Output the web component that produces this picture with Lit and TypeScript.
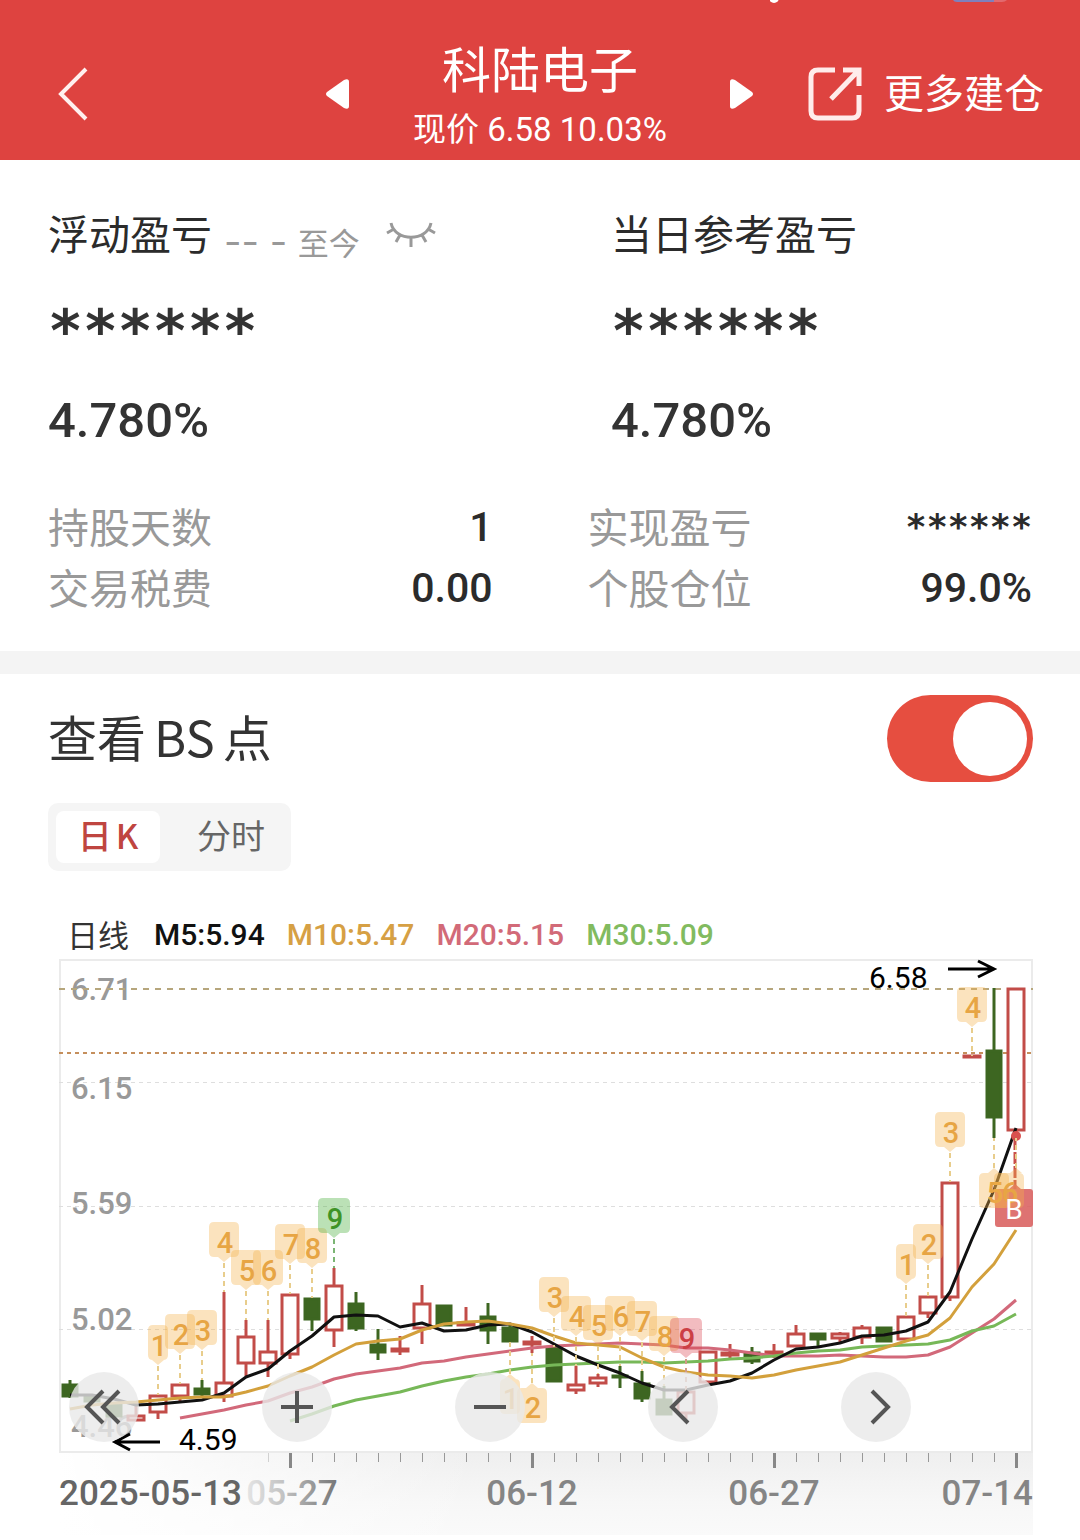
import { LitElement, html, svg, css } from "lit";
import { customElement, property, state } from "lit/decorators.js";

type Candle = [kind: "up" | "down", top: number, bottom: number, high: number, low: number];
type Tone = "amber" | "green" | "red";
interface Tag {
  at: number;
  text: string;
  y: number;
  end: number;
  below?: boolean;
  tone?: Tone;
  shift?: number;
}

const STEP = 22;
const xAt = (i: number) => 11 + STEP * i;

/* Body top, body bottom, high and low of each trading day, in chart units. */
const CANDLES: Candle[] = [
  ["down", 426, 439, 422, 440],
  ["down", 437, 444, 437, 444],
  ["down", 445, 459, 445, 459],
  ["up", 457, 463, 445, 463],
  ["up", 437, 455, 437, 461],
  ["up", 426, 439, 426, 444],
  ["down", 430, 437, 422, 440],
  ["up", 424, 439, 334, 444],
  ["up", 378, 406, 362, 418],
  ["up", 393, 406, 362, 419],
  ["up", 336, 397, 336, 401],
  ["down", 340, 362, 340, 373],
  ["up", 327, 373, 310, 389],
  ["down", 345, 371, 334, 373],
  ["down", 386, 395, 371, 402],
  ["up", 391, 393, 378, 397],
  ["up", 345, 371, 327, 386],
  ["down", 347, 368, 347, 368],
  ["up", 365, 367, 349, 368],
  ["down", 358, 373, 345, 386],
  ["down", 369, 384, 365, 384],
  ["up", 384, 386, 378, 395],
  ["down", 389, 424, 389, 424],
  ["up", 426, 433, 408, 436],
  ["up", 419, 426, 416, 429],
  ["down", 418, 418, 408, 430],
  ["down", 425, 441, 413, 444],
  ["down", 441, 457, 428, 457],
  ["up", 433, 456, 433, 461],
  ["up", 393, 425, 393, 425],
  ["up", 395, 397, 386, 400],
  ["down", 394, 404, 389, 406],
  ["up", 394, 396, 386, 400],
  ["up", 375, 389, 367, 389],
  ["down", 375, 382, 375, 390],
  ["up", 375, 381, 374, 384],
  ["up", 369, 380, 367, 386],
  ["down", 369, 384, 369, 384],
  ["up", 358, 382, 358, 382],
  ["up", 338, 356, 338, 360],
  ["up", 224, 340, 224, 343],
  ["up", 98, 99, 98, 99],
  ["down", 92, 160, 30, 180],
  ["up", 30, 173, 30, 176],
];

const AVERAGES = [
  {
    cls: "ma20",
    from: 5,
    ys: [460, 456, 452, 447, 443, 435, 429, 421, 416, 413, 410, 405, 403, 399, 396, 393, 390, 388, 387, 386, 385, 386, 387, 390, 390, 392, 395, 398, 398, 398, 397, 398, 399, 399, 397, 389, 375, 361, 342],
  },
  {
    cls: "ma30",
    from: 10,
    ys: [463, 456, 448, 442, 438, 434, 428, 423, 419, 416, 412, 409, 407, 406, 405, 404, 404, 405, 404, 403, 401, 400, 398, 395, 393, 392, 389, 388, 387, 386, 382, 373, 368, 356],
  },
  {
    cls: "ma5",
    from: 0,
    ys: [437, 437, 441, 447, 446, 444, 442, 435, 419, 411, 393, 378, 359, 357, 358, 369, 365, 373, 372, 367, 366, 374, 386, 398, 407, 415, 425, 432, 432, 427, 423, 415, 402, 391, 389, 385, 378, 377, 373, 364, 334, 281, 232, 170],
  },
  {
    cls: "ma10",
    from: 0,
    ys: [451, 447, 445, 444, 442, 440, 439, 439, 434, 428, 418, 409, 397, 386, 383, 381, 372, 366, 364, 363, 366, 370, 378, 385, 387, 389, 400, 409, 414, 417, 418, 420, 417, 412, 408, 404, 397, 390, 383, 377, 360, 329, 306, 272],
  },
];

const TAGS: Tag[] = [
  { at: 4, text: "1", y: 367, end: 437 },
  { at: 5, text: "2", y: 356, end: 426 },
  { at: 6, text: "3", y: 352, end: 422 },
  { at: 7, text: "4", y: 264, end: 334 },
  { at: 8, text: "5", y: 292, end: 362 },
  { at: 9, text: "6", y: 292, end: 362 },
  { at: 10, text: "7", y: 266, end: 336 },
  { at: 11, text: "8", y: 270, end: 340 },
  { at: 12, text: "9", y: 240, end: 310, tone: "green" },
  { at: 20, text: "1", y: 421, end: 384, below: true },
  { at: 21, text: "2", y: 430, end: 395, below: true },
  { at: 22, text: "3", y: 319, end: 389 },
  { at: 23, text: "4", y: 338, end: 408 },
  { at: 24, text: "5", y: 347, end: 416 },
  { at: 25, text: "6", y: 338, end: 408 },
  { at: 26, text: "7", y: 343, end: 413 },
  { at: 27, text: "8", y: 358, end: 428 },
  { at: 28, text: "9", y: 360, end: 433, tone: "red" },
  { at: 38, text: "1", y: 286, end: 358 },
  { at: 39, text: "2", y: 266, end: 338 },
  { at: 40, text: "3", y: 154, end: 224 },
  { at: 41, text: "4", y: 29, end: 98 },
  { at: 42, text: "5", y: 215, end: 180, below: true },
  { at: 43, text: "6", y: 215, end: 180, below: true, shift: -7 },
];

const PRICES = [
  { text: "6.71", y: 42 },
  { text: "6.15", y: 141 },
  { text: "5.59", y: 256 },
  { text: "5.02", y: 372 },
  { text: "4.46", y: 479 },
];

@customElement("k-line-chart")
export class KLineChart extends LitElement {
  static styles = css`
    :host {
      display: block;
    }
    .wrap {
      position: relative;
    }
    .plot {
      display: block;
      width: 100%;
      height: auto;
      font-family: Roboto, "Liberation Sans", sans-serif;
    }
    .frame {
      fill: none;
      stroke: #ebebeb;
      stroke-width: 2;
    }
    .grid {
      stroke: #dedede;
      stroke-width: 1;
      stroke-dasharray: 4 4;
      shape-rendering: crispEdges;
    }
    .price-line {
      stroke: #b6a67c;
      stroke-width: 2;
      stroke-dasharray: 6 6;
    }
    .cost-line {
      stroke: #c58f5c;
      stroke-width: 2;
      stroke-dasharray: 4 4;
    }
    .up {
      fill: #ffffff;
      stroke: #c24c48;
      stroke-width: 3;
    }
    .down {
      fill: #3d6621;
      stroke: #3d6621;
      stroke-width: 3;
    }
    .ma {
      fill: none;
      stroke-width: 3;
      stroke-linejoin: round;
    }
    .ma5 {
      stroke: #111111;
    }
    .ma10 {
      stroke: #d3a03c;
    }
    .ma20 {
      stroke: #d2697a;
    }
    .ma30 {
      stroke: #77b858;
    }
    .price {
      fill: #999999;
      font-size: 31px;
      font-weight: 500;
    }
    .note {
      fill: #000000;
      font-size: 30px;
    }
    .arrow {
      fill: none;
      stroke: #000000;
      stroke-width: 3;
    }
    .stem {
      stroke: #e8cd8c;
      stroke-width: 2;
      stroke-dasharray: 5 4;
    }
    .stem.green {
      stroke: #7bb574;
    }
    .stem.red {
      stroke: #cf9a86;
    }
    .box {
      fill: #f3b14b;
      fill-opacity: 0.36;
    }
    .box.green {
      fill: #4caf3f;
      fill-opacity: 0.38;
    }
    .box.red {
      fill: #dc4650;
      fill-opacity: 0.36;
    }
    .digit {
      fill: #e7a544;
      font-size: 29px;
      font-weight: 500;
      text-anchor: middle;
    }
    .digit.green {
      fill: #3f9426;
    }
    .digit.red {
      fill: #cc3f45;
    }
    .buy-box {
      fill: #d9605e;
      fill-opacity: 0.88;
    }
    .buy-dot {
      fill: #d9504e;
    }
    .buy-stem {
      stroke: #c9504a;
      stroke-width: 3;
      stroke-dasharray: 12 2;
    }
    .buy-text {
      fill: #ffffff;
      font-size: 28px;
      text-anchor: middle;
    }
    .tick {
      stroke: #999999;
      stroke-width: 1;
      shape-rendering: crispEdges;
    }
    .tick.major {
      stroke: #888888;
      stroke-width: 3;
    }
    .date {
      fill: #858585;
      font-size: 35px;
      font-weight: 500;
      text-anchor: middle;
    }
    .date.first {
      fill: #666666;
      text-anchor: start;
    }
    .date.last {
      text-anchor: end;
    }
    .date.faded {
      fill: url(#date-fade);
    }
    .controls {
      position: absolute;
      left: 1%;
      right: 12.5%;
      top: 71.8%;
      display: flex;
      justify-content: space-between;
    }
    .control {
      width: 70px;
      height: 70px;
      padding: 0;
      border: 0;
      border-radius: 50%;
      background: rgba(232, 232, 232, 0.8);
      cursor: pointer;
    }
    .control svg {
      display: block;
      width: 70px;
      height: 70px;
      fill: none;
      stroke: #555555;
      stroke-width: 4;
    }
  `;

  private candle([kind, top, bottom, high, low]: Candle, i: number) {
    const x = xAt(i);
    const half = kind === "up" ? 8 : 7;
    const inset = bottom - top > 3 ? 1 : 0;
    return svg`<g class=${kind}>
      <line x1=${x} x2=${x} y1=${high} y2=${low}></line>
      <rect x=${x - half} y=${top + inset} width=${half * 2} height=${Math.max(bottom - top - inset * 2, 1)}></rect>
    </g>`;
  }

  private tag({ at, text, y, end, below = false, tone = "amber", shift = 0 }: Tag) {
    const x = xAt(at);
    const cx = x + shift;
    const w = text === "1" ? 20 : tone === "amber" ? 30 : 32;
    const l = cx - w / 2;
    const r = cx + w / 2;
    const b = y + 35;
    const shape = below
      ? `M${l + 5} ${y}H${x - 6}L${x} ${y - 5}L${Math.min(x + 6, r)} ${y}H${r - 5}Q${r} ${y} ${r} ${y + 5}V${b - 5}Q${r} ${b} ${r - 5} ${b}H${l + 5}Q${l} ${b} ${l} ${b - 5}V${y + 5}Q${l} ${y} ${l + 5} ${y}Z`
      : `M${l + 5} ${y}H${r - 5}Q${r} ${y} ${r} ${y + 5}V${b - 5}Q${r} ${b} ${r - 5} ${b}H${x + 6}L${x} ${b + 5}L${x - 6} ${b}H${l + 5}Q${l} ${b} ${l} ${b - 5}V${y + 5}Q${l} ${y} ${l + 5} ${y}Z`;
    return svg`
      <line class="stem ${tone}" x1=${x} x2=${x} y1=${below ? y - 5 : b + 6} y2=${end}></line>
      <path class="box ${tone}" d=${shape}></path>
      <text class="digit ${tone}" x=${cx + 1} y=${y + (below ? 30 : 31)}>${text}</text>`;
  }

  private ticks() {
    const out = [];
    for (let i = 10; i <= 43; i++) {
      const major = (i - 10) % 11 === 0;
      out.push(svg`<line class=${major ? "tick major" : "tick"} x1=${xAt(i)} x2=${xAt(i)} y1="495" y2=${major ? 510 : 504}></line>`);
    }
    return out;
  }

  render() {
    return html`
      <div class="wrap">
        <svg class="plot" viewBox="0 0 974 577" role="img" aria-label="日线">
          <defs>
            <linearGradient id="axis-shade" x1="0" y1="0" x2="0" y2="1">
              <stop offset="0" stop-color="#efefef"></stop>
              <stop offset="0.6" stop-color="#f7f7f7"></stop>
              <stop offset="1" stop-color="#fafafa"></stop>
            </linearGradient>
            <linearGradient id="axis-fade" x1="0" y1="0" x2="1" y2="0">
              <stop offset="0" stop-color="#ffffff"></stop>
              <stop offset="1" stop-color="#ffffff" stop-opacity="0"></stop>
            </linearGradient>
            <linearGradient id="date-fade" gradientUnits="userSpaceOnUse" x1="186" y1="0" x2="278" y2="0">
              <stop offset="0" stop-color="#e6e6e6"></stop>
              <stop offset="0.4" stop-color="#c4c4c4"></stop>
              <stop offset="1" stop-color="#777777"></stop>
            </linearGradient>
          </defs>
          <rect x="0" y="495" width="974" height="82" fill="url(#axis-shade)"></rect>
          <rect x="0" y="495" width="420" height="82" fill="url(#axis-fade)"></rect>
          <rect class="frame" x="1" y="2" width="972" height="492"></rect>
          ${[124, 248, 371].map((y) => svg`<line class="grid" x1="0" x2="974" y1=${y} y2=${y}></line>`)}
          ${PRICES.map((p) => svg`<text class="price" x="12" y=${p.y}>${p.text}</text>`)}
          <line class="price-line" x1="0" x2="974" y1="31" y2="31"></line>
          <line class="cost-line" x1="0" x2="974" y1="95" y2="95"></line>
          ${CANDLES.map((c, i) => this.candle(c, i))}
          ${AVERAGES.map(
            (a) => svg`<polyline class="ma ${a.cls}" points=${a.ys.map((y, i) => `${xAt(a.from + i)},${y}`).join(" ")}></polyline>`
          )}
          <circle class="buy-dot" cx="957" cy="178" r="5"></circle>
          <line class="buy-stem" x1="956" x2="956" y1="180" y2="231"></line>
          <path class="buy-box" d="M939 231H950L956 226L962 231H971Q974 231 974 234V266Q974 269 971 269H939Q936 269 936 266V234Q936 231 939 231Z"></path>
          ${TAGS.map((t) => this.tag(t))}
          <text class="buy-text" x="955" y="261">B</text>
          <text class="note" x="810" y="30">6.58</text>
          <path class="arrow" d="M889 11H935M919 3L935 11L919 19"></path>
          <text class="note" x="120" y="492">4.59</text>
          <path class="arrow" d="M101 484H56M71 476L56 484L71 492"></path>
          <line class="tick" x1="209" x2="209" y1="495" y2="504" opacity="0.4"></line>
          ${this.ticks()}
          <text class="date first" x="0" y="547">2025-05-13</text>
          <text class="date faded" x="233" y="547">05-27</text>
          <text class="date" x="473" y="547">06-12</text>
          <text class="date" x="715" y="547">06-27</text>
          <text class="date last" x="974" y="547">07-14</text>
        </svg>
        <div class="controls">
          <button class="control" type="button" aria-label="最早">
            <svg viewBox="0 0 70 70"><path d="M34 19L18 35L34 51M50 19L34 35L50 51"></path></svg>
          </button>
          <button class="control" type="button" aria-label="放大">
            <svg viewBox="0 0 70 70"><path d="M19 35H51M35 19V51"></path></svg>
          </button>
          <button class="control" type="button" aria-label="缩小">
            <svg viewBox="0 0 70 70"><path d="M19 35H51"></path></svg>
          </button>
          <button class="control" type="button" aria-label="向左">
            <svg viewBox="0 0 70 70"><path d="M40 19L24 35L40 51"></path></svg>
          </button>
          <button class="control" type="button" aria-label="向右">
            <svg viewBox="0 0 70 70"><path d="M31 19L47 35L31 51"></path></svg>
          </button>
        </div>
      </div>
    `;
  }
}

@customElement("stock-header")
export class StockHeader extends LitElement {
  @property() name = "";
  @property() quote = "";

  static styles = css`
    :host {
      display: block;
    }
    .bar {
      position: relative;
      display: grid;
      grid-template-columns: 1fr auto 1fr;
      align-items: center;
      box-sizing: border-box;
      min-height: 160px;
      padding: 28px 36px 0;
      background: #de4340;
      color: #ffffff;
      overflow: hidden;
    }
    .status {
      position: absolute;
      top: 0;
      right: 70px;
      width: 240px;
      height: 4px;
    }
    button {
      padding: 0;
      border: 0;
      background: none;
      color: inherit;
      font: inherit;
      cursor: pointer;
    }
    svg {
      display: block;
    }
    .back {
      justify-self: start;
      padding: 0 20px;
    }
    .center {
      display: flex;
      align-items: center;
      justify-content: space-between;
      gap: 62px;
    }
    .titles {
      display: flex;
      flex-direction: column;
      align-items: center;
      min-width: 252px;
      padding-top: 6px;
    }
    .name {
      margin: 0;
      font-size: 49px;
      font-weight: 400;
      line-height: 66px;
    }
    .quote {
      margin: 0;
      font-family: Roboto, "Noto Sans CJK SC", sans-serif;
      font-size: 33px;
      line-height: 60px;
      white-space: nowrap;
    }
    .more {
      display: flex;
      align-items: center;
      justify-self: end;
      gap: 22px;
      font-size: 40px;
      line-height: 54px;
      white-space: nowrap;
    }
    .more-text {
      padding-bottom: 6px;
    }
  `;

  render() {
    return html`
      <header class="bar">
        <svg class="status" viewBox="0 0 240 4" aria-hidden="true">
          <circle cx="4" cy="-2" r="5" fill="#ffffff"></circle>
          <path d="M183 0H224V2H187Q184 2 183 0Z" fill="#7f80bd"></path>
          <path d="M224 0H237Q235 2 232 2H224Z" fill="#e2696e"></path>
        </svg>
        <button class="back" type="button" aria-label="返回">
          <svg width="34" height="54" viewBox="0 0 34 54" fill="none" stroke="#fff0ef" stroke-width="4">
            <path d="M30 2L5 27L30 52"></path>
          </svg>
        </button>
        <div class="center">
          <button type="button" aria-label="上一只">
            <svg width="25" height="30" viewBox="0 0 25 30" fill="#fff"><path d="M1 13Q-1 15 1 17L18 29Q23 31 23 27V3Q23 -1 18 1Z"></path></svg>
          </button>
          <div class="titles">
            <h1 class="name">${this.name}</h1>
            <p class="quote">${this.quote}</p>
          </div>
          <button type="button" aria-label="下一只">
            <svg width="25" height="30" viewBox="0 0 25 30" fill="#fff"><path d="M23 13Q25 15 23 17L6 29Q1 31 1 27V3Q1 -1 6 1Z"></path></svg>
          </button>
        </div>
        <button class="more" type="button">
          <svg width="54" height="54" viewBox="0 0 54 54" fill="none" stroke="#ffeceb" stroke-width="5">
            <path d="M27 3H10Q3 3 3 10V44Q3 51 10 51H44Q51 51 51 44V28"></path>
            <path d="M35 3H51V19M51 3L23 32"></path>
          </svg>
          <span class="more-text">更多建仓</span>
        </button>
      </header>
    `;
  }
}

@customElement("app-root")
export class AppRoot extends LitElement {
  @state() private showPoints = true;
  @state() private tab = "day";

  static styles = css`
    :host {
      display: block;
      background: #ffffff;
      color: #2b2b2b;
      font-family: "Noto Sans CJK SC", sans-serif;
    }
    .summary {
      padding: 45px 48px 33px;
    }
    .headline {
      display: grid;
      grid-template-columns: 563fr 421fr;
      row-gap: 33px;
    }
    .label {
      display: flex;
      align-items: center;
      height: 54px;
      padding-bottom: 6px;
      font-size: 41px;
      line-height: 54px;
      white-space: nowrap;
    }
    .since {
      padding: 18px 0 0 12px;
      color: #999999;
      font-size: 31px;
      line-height: 30px;
    }
    .dashes {
      font-family: Inter, sans-serif;
      font-size: 38px;
    }
    .eye {
      padding: 6px 0 0;
      margin-left: 26px;
      border: 0;
      background: none;
      cursor: pointer;
    }
    .eye svg {
      display: block;
    }
    .masked {
      padding-top: 6px;
      font-family: "DejaVu Sans Mono", monospace;
      font-size: 58px;
      font-weight: 700;
      line-height: 54px;
      color: #333333;
    }
    .percent {
      font-family: Roboto, sans-serif;
      font-size: 49px;
      font-weight: 500;
      line-height: 60px;
      color: #333333;
    }
    .facts {
      display: grid;
      grid-template-columns: 1fr 1fr;
      column-gap: 95px;
      margin: 45px 0 0;
    }
    .fact {
      display: flex;
      align-items: center;
      justify-content: space-between;
      height: 61px;
    }
    .fact dt {
      padding-bottom: 4px;
      color: #999999;
      font-size: 41px;
      line-height: 54px;
    }
    .fact dd {
      margin: 0;
      font-family: Roboto, sans-serif;
      font-size: 41px;
      font-weight: 500;
      line-height: 60px;
    }
    .fact dd.hidden {
      font-family: "DejaVu Sans Mono", monospace;
      font-size: 35px;
      font-weight: 700;
    }
    .divider {
      height: 23px;
      background: #f4f4f4;
    }
    .points {
      padding: 21px 47px 5px 48px;
    }
    .points-head {
      display: flex;
      align-items: center;
      justify-content: space-between;
      height: 87px;
    }
    .points-title {
      padding-bottom: 6px;
      font-size: 49px;
      line-height: 66px;
      color: #333333;
    }
    .latin {
      margin: 0 8px;
    }
    .switch {
      appearance: none;
      display: flex;
      align-items: center;
      box-sizing: border-box;
      width: 146px;
      height: 87px;
      margin: 0;
      padding: 6px;
      border-radius: 44px;
      background: #cccccc;
      cursor: pointer;
    }
    .switch::before {
      content: "";
      width: 74px;
      height: 74px;
      border-radius: 50%;
      background: #ffffff;
    }
    .switch:checked {
      justify-content: flex-end;
      background: #e64e40;
    }
    .tabs {
      display: inline-flex;
      gap: 19px;
      margin-top: 21px;
      padding: 8px;
      border-radius: 10px;
      background: #f5f5f5;
      vertical-align: top;
    }
    .tab {
      width: 104px;
      height: 52px;
      padding: 0 0 4px;
      border: 0;
      border-radius: 8px;
      background: none;
      color: #666666;
      font: inherit;
      font-size: 34px;
      line-height: 48px;
      cursor: pointer;
      white-space: nowrap;
    }
    .tab.active {
      background: #ffffff;
      color: #bf4540;
      font-weight: 500;
    }
    .tab .latin {
      margin: 0 0 0 4px;
    }
    .chart {
      padding-left: 11px;
    }
    .legend {
      display: flex;
      gap: 22px;
      margin: 44px 0 3px;
      padding-left: 8px;
      font-family: Roboto, sans-serif;
      font-size: 30px;
      font-weight: 500;
      line-height: 40px;
      white-space: nowrap;
    }
    .legend .kind {
      margin-right: 3px;
      font-family: "Noto Sans CJK SC", sans-serif;
      font-size: 31px;
      font-weight: 400;
      line-height: 38px;
      color: #333333;
    }
    .m5 {
      color: #111111;
    }
    .m10 {
      color: #d6a044;
    }
    .m20 {
      color: #d26a78;
    }
    .m30 {
      color: #82bb5f;
    }
  `;

  render() {
    return html`
      <stock-header name="科陆电子" quote="现价 6.58 10.03%"></stock-header>
      <main>
        <section class="summary">
          <div class="headline">
            <div class="label">
              浮动盈亏
              <span class="since"><span class="dashes">-- - </span>至今</span>
              <button class="eye" type="button" aria-label="显示金额">
                <svg width="50" height="26" viewBox="0 0 50 26" fill="none" stroke="#999" stroke-width="3">
                  <path d="M5 1C9 20 41 20 45 1M1 11L8 7M49 11L42 7M10 20L14 13M40 20L36 13M25 15V25"></path>
                </svg>
              </button>
            </div>
            <div class="label">当日参考盈亏</div>
            <div class="masked">******</div>
            <div class="masked">******</div>
            <div class="percent">4.780%</div>
            <div class="percent">4.780%</div>
          </div>
          <dl class="facts">
            <div class="fact"><dt>持股天数</dt><dd>1</dd></div>
            <div class="fact"><dt>实现盈亏</dt><dd class="hidden">******</dd></div>
            <div class="fact"><dt>交易税费</dt><dd>0.00</dd></div>
            <div class="fact"><dt>个股仓位</dt><dd>99.0%</dd></div>
          </dl>
        </section>
        <div class="divider"></div>
        <section class="points">
          <div class="points-head">
            <label class="points-title" for="bs-switch">查看<span class="latin">BS</span>点</label>
            <input
              class="switch"
              id="bs-switch"
              type="checkbox"
              role="switch"
              .checked=${this.showPoints}
              @change=${(e: Event) => (this.showPoints = (e.target as HTMLInputElement).checked)}
            />
          </div>
          <div class="tabs" role="tablist">
            <button class="tab ${this.tab === "day" ? "active" : ""}" type="button" role="tab" @click=${() => (this.tab = "day")}>日<span class="latin">K</span></button>
            <button class="tab ${this.tab === "time" ? "active" : ""}" type="button" role="tab" @click=${() => (this.tab = "time")}>分时</button>
          </div>
          <div class="chart">
            <div class="legend">
              <span class="kind">日线</span>
              <span class="m5">M5:5.94</span>
              <span class="m10">M10:5.47</span>
              <span class="m20">M20:5.15</span>
              <span class="m30">M30:5.09</span>
            </div>
            <k-line-chart></k-line-chart>
          </div>
        </section>
      </main>
    `;
  }
}
